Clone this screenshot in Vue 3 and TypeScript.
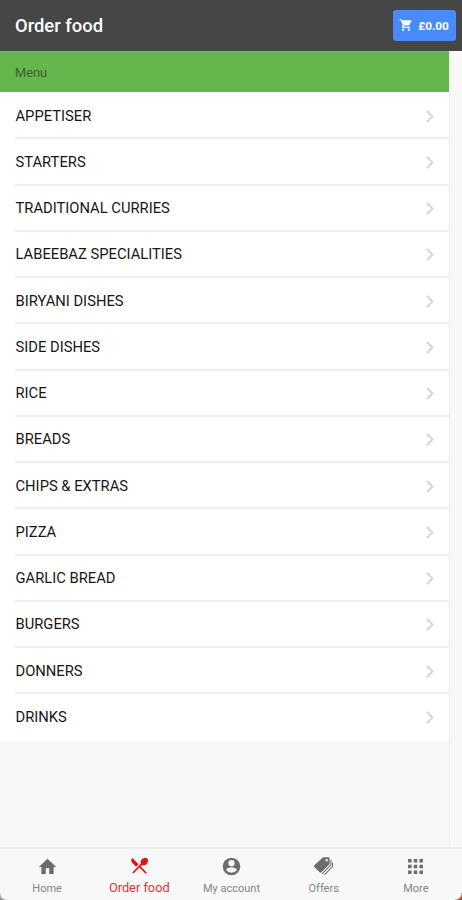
<script setup lang="ts">
interface Tab {
  label: string
  icon: string
  active?: boolean
}

const categories: string[] = [
  'APPETISER',
  'STARTERS',
  'TRADITIONAL CURRIES',
  'LABEEBAZ SPECIALITIES',
  'BIRYANI DISHES',
  'SIDE DISHES',
  'RICE',
  'BREADS',
  'CHIPS & EXTRAS',
  'PIZZA',
  'GARLIC BREAD',
  'BURGERS',
  'DONNERS',
  'DRINKS',
]

const tabs: Tab[] = [
  { label: 'Home', icon: 'home' },
  { label: 'Order food', icon: 'food', active: true },
  { label: 'My account', icon: 'account' },
  { label: 'Offers', icon: 'offers' },
  { label: 'More', icon: 'more' },
]
</script>

<template>
  <div class="screen">
    <header class="toolbar">
      <h1 class="title">Order food</h1>
      <button class="cart" type="button">
        <svg class="cart-icon" viewBox="0 0 24 24">
          <path d="M7 18a2 2 0 1 0 0 4 2 2 0 0 0 0-4zM1 2v2h2l3.600 7.600-1.400 2.400C4.500 15.400 5.500 17 7 17h12v-2H7.400l1.100-2h7.500c.7 0 1.400-.4 1.700-1L21.300 5.500C21.700 4.800 21.200 4 20.400 4H5.200l-.9-2zM17 18a2 2 0 1 0 0 4 2 2 0 0 0 0-4z" />
        </svg>
        <span>£0.00</span>
      </button>
    </header>

    <main class="content">
      <section class="pane">
        <h2 class="list-header">Menu</h2>
        <ul class="list">
          <li v-for="name in categories" :key="name" class="item">
            <div class="item-inner">
              <span>{{ name }}</span>
              <svg class="chevron" viewBox="0 0 8 13">
                <path d="M1 1l5.500 5.500L1 12" />
              </svg>
            </div>
          </li>
        </ul>
      </section>
    </main>

    <nav class="tabs">
      <a v-for="tab in tabs" :key="tab.label" class="tab" :class="{ active: tab.active }">
        <svg class="tab-icon" viewBox="0 0 24 24">
          <path v-if="tab.icon === 'home'" d="M10 20.500v-6.500h4v6.500h5V12.500H22L12 3 2 12.500h3v8z" />
          <g v-else-if="tab.icon === 'food'">
            <path d="M8.100 13.340l2.830-2.830L3.910 3.500a4 4 0 0 0 0 5.660zM14.880 11.530c1.530.71 3.680.21 5.270-1.380 1.910-1.910 2.280-4.650.81-6.120-1.460-1.460-4.200-1.100-6.120.81-1.590 1.590-2.090 3.740-1.380 5.270L3.700 19.870l1.410 1.410L12 14.410l6.880 6.880 1.410-1.410L13.410 13z" />
          </g>
          <path v-else-if="tab.icon === 'account'" fill-rule="evenodd" d="M12 2a10 10 0 1 0 0 20 10 10 0 0 0 0-20zM12 4.600a3.600 3.600 0 1 1 0 7.200 3.600 3.600 0 0 1 0-7.200zM12 19.200a7.200 7.200 0 0 1-6-3.200c0-2 4-3.100 6-3.100s6 1.100 6 3.100a7.200 7.200 0 0 1-6 3.200z" />
          <g v-else-if="tab.icon === 'offers'">
            <path fill-rule="evenodd" d="M11.500 1.500h6q1.500 0 1.500 1.500v6L9.600 18.500q-1 .9-2 0L1.500 12.500q-.9-1 0-2zM15.700 3.500a1.400 1.400 0 1 0 0 2.800 1.400 1.400 0 0 0 0-2.800z" />
            <path class="tag-edge" d="M20.500 4.500v5.500L10.300 20.400M22.300 7.500v4.500l-9.300 9.500" />
          </g>
          <path v-else d="M3.500 3.500h4v4h-4zM10 3.500h4v4h-4zM16.500 3.500h4v4h-4zM3.500 10h4v4h-4zM10 10h4v4h-4zM16.500 10h4v4h-4zM3.500 16.500h4v4h-4zM10 16.500h4v4h-4zM16.500 16.500h4v4h-4z" />
        </svg>
        <span class="tab-label">{{ tab.label }}</span>
      </a>
    </nav>
  </div>
</template>

<style>
body {
  margin: 0;
  background: #f8f8f8;
}
</style>

<style scoped>
.screen {
  position: relative;
  display: flex;
  flex-direction: column;
  height: 900px;
  overflow: hidden;
  box-sizing: border-box;
  background: #f8f8f8;
  font-family: Roboto, "Liberation Sans", sans-serif;
}

.screen::before,
.screen::after {
  content: "";
  position: absolute;
  bottom: 0;
  z-index: 1;
  width: 7px;
  height: 7px;
}

.screen::before {
  left: 0;
  background: radial-gradient(circle at 100% 0, transparent 6px, #999 8px);
}

.screen::after {
  right: 0;
  background: radial-gradient(circle at 0 0, transparent 6px, #b5522c 7.500px);
}

.toolbar {
  display: flex;
  flex: none;
  align-items: center;
  justify-content: space-between;
  height: 51px;
  padding: 0 6px 0 15px;
  background: #464646;
}

.title {
  margin: 0;
  color: #fff;
  font-size: 18.400px;
  font-weight: 500;
  line-height: 24px;
}

.cart {
  display: flex;
  align-items: center;
  justify-content: center;
  gap: 5px;
  width: 63px;
  height: 31px;
  padding: 0;
  border: 0;
  border-radius: 3px;
  background: #4a8bfc;
  color: #fff;
  font: 700 11.800px Roboto, "Liberation Sans", sans-serif;
}

.cart-icon {
  width: 14px;
  height: 14px;
  margin: -2px 0 0 -1px;
  fill: currentColor;
}

.content {
  display: flex;
  flex: 1;
  min-height: 0;
}

.pane {
  width: 449px;
  border-right: 1px solid #eeeeee;
}

.list-header {
  height: 41px;
  margin: 0;
  padding-left: 15px;
  background: #66b64b;
  color: #3f5d36;
  font-size: 12.800px;
  font-weight: 400;
  line-height: 43px;
}

.list {
  margin: 0;
  padding: 1px 0 0 15px;
  background: #fff;
  list-style: none;
}

.item-inner {
  display: flex;
  align-items: center;
  justify-content: space-between;
  box-sizing: border-box;
  height: 46.260px;
  padding: 1px 15px 0 0.500px;
  border-bottom: 2px solid #f1f1f1;
  color: #161616;
  font-size: 14.760px;
}

.item:last-child .item-inner {
  border-bottom-color: transparent;
}

.chevron {
  width: 8px;
  height: 13px;
  margin-top: 1px;
  fill: none;
  stroke: #d4d4d4;
  stroke-width: 1.800;
}

.tabs {
  display: grid;
  flex: none;
  grid-template-columns: repeat(5, 1fr);
  box-sizing: border-box;
  height: 53px;
  padding-left: 1px;
  border-top: 2px solid #eeeeee;
  background: #f8f8f8;
}

.tab {
  display: flex;
  flex-direction: column;
  align-items: center;
  padding-top: 7px;
  color: #6c6c6c;
}

.tab-icon {
  width: 21px;
  height: 21px;
  fill: currentColor;
}

.tag-edge {
  fill: none;
  stroke: currentColor;
  stroke-width: 1.200;
}

.tab-label {
  margin-top: 5px;
  color: #858585;
  font-size: 11px;
  line-height: 14px;
}

.active {
  color: #e01414;
}

.active .tab-icon {
  margin-top: -1px;
}

.active .tab-label {
  color: #e53238;
  font-size: 12.800px;
}
</style>
